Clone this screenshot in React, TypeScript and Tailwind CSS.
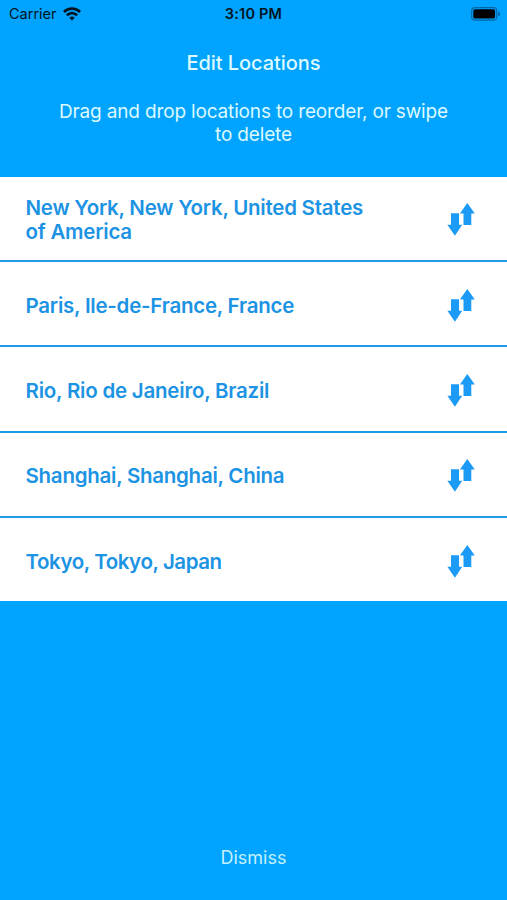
const locations = [
    { name: 'New York, New York, United States of America', spacing: 'tracking-[-0.24px]' },
    { name: 'Paris, Ile-de-France, France', spacing: 'tracking-[-0.24px]' },
    { name: 'Rio, Rio de Janeiro, Brazil', spacing: 'tracking-[-0.22px]' },
    { name: 'Shanghai, Shanghai, China', spacing: 'tracking-[-0.26px]' },
    { name: 'Tokyo, Tokyo, Japan', spacing: 'tracking-[-0.42px]' }
];

function WifiIcon() {
    return (
        <svg width="18" height="14" viewBox="0 0 18 14" fill="none" stroke="#001522" strokeWidth="2.6">
            <path d="M.9 5a11.5 11.5 0 0 1 16.2 0" />
            <path d="M3.8 8.3a7.4 7.4 0 0 1 10.4 0" />
            <path d="M9 13.6 6.2 10.8a4 4 0 0 1 5.6 0z" fill="#001522" stroke="none" />
        </svg>
    );
}

function BatteryIcon() {
    return (
        <svg width="30" height="14" viewBox="0 0 30 14">
            <rect x="0.7" y="0.7" width="25" height="12.4" rx="3.4" fill="none" stroke="#0065a4" strokeWidth="1.2" />
            <rect x="2.3" y="2.3" width="21.8" height="9.2" rx="1.8" fill="#000" />
            <path d="M27 4.8c1.7.4 2 1.2 2 2.1s-.3 1.7-2 2.1z" fill="#0065a4" />
        </svg>
    );
}

function ReorderIcon() {
    return (
        <svg width="28" height="34" viewBox="0 0 28 34" fill="#1c9bf6">
            <path d="M4 10.3h8v11.5h3.2L7.9 32.7.4 21.8H4z" />
            <path d="M20.3 0 27.8 10.5H24.3V22h-7.8V10.5H12.9z" />
        </svg>
    );
}

function StatusBar() {
    return (
        <div className="grid h-7 grid-cols-3 items-center pl-[9px] pr-[6px] text-[#001522]">
            <div className="flex items-center gap-[6px] text-[14.5px]">
                Carrier
                <WifiIcon />
            </div>
            <div className="-ml-[3px] text-center text-[14.5px] font-semibold tracking-[0.2px]">3:10 PM</div>
            <div className="flex justify-end">
                <BatteryIcon />
            </div>
        </div>
    );
}

export default function App() {
    return (
        <div className="flex h-[900px] w-[507px] flex-col overflow-hidden bg-[#00a4ff] font-['Inter',sans-serif]">
            <StatusBar />

            {/* Header */}
            <header className="flex h-[148.5px] flex-col items-center pt-[23px] text-center text-[#dcf9ff]">
                <h1 className="text-[20px] font-medium leading-6 tracking-[-0.05px]">Edit Locations</h1>
                <p className="mt-[25px] w-[420px] text-[19px] leading-[23px] tracking-[-0.16px]">
                    Drag and drop locations to reorder, or swipe
                    <br />
                    to delete
                </p>
            </header>

            {/* Location list */}
            <ul>
                {locations.map((location) => (
                    <li
                        key={location.name}
                        className="flex h-[85.4px] items-center justify-between border-b-2 border-[#209ae6] bg-white pl-[25.5px] pr-8 pt-1 last:border-[#00a4ff]"
                    >
                        <span
                            className={`w-[350px] text-[20.5px] font-semibold leading-6 text-[#1c93e3] ${location.spacing}`}
                        >
                            {location.name}
                        </span>
                        <ReorderIcon />
                    </li>
                ))}
            </ul>

            <button className="mx-auto mb-[30px] mt-auto text-[18px] leading-6 text-[#c4f0ff]">Dismiss</button>
        </div>
    );
}
